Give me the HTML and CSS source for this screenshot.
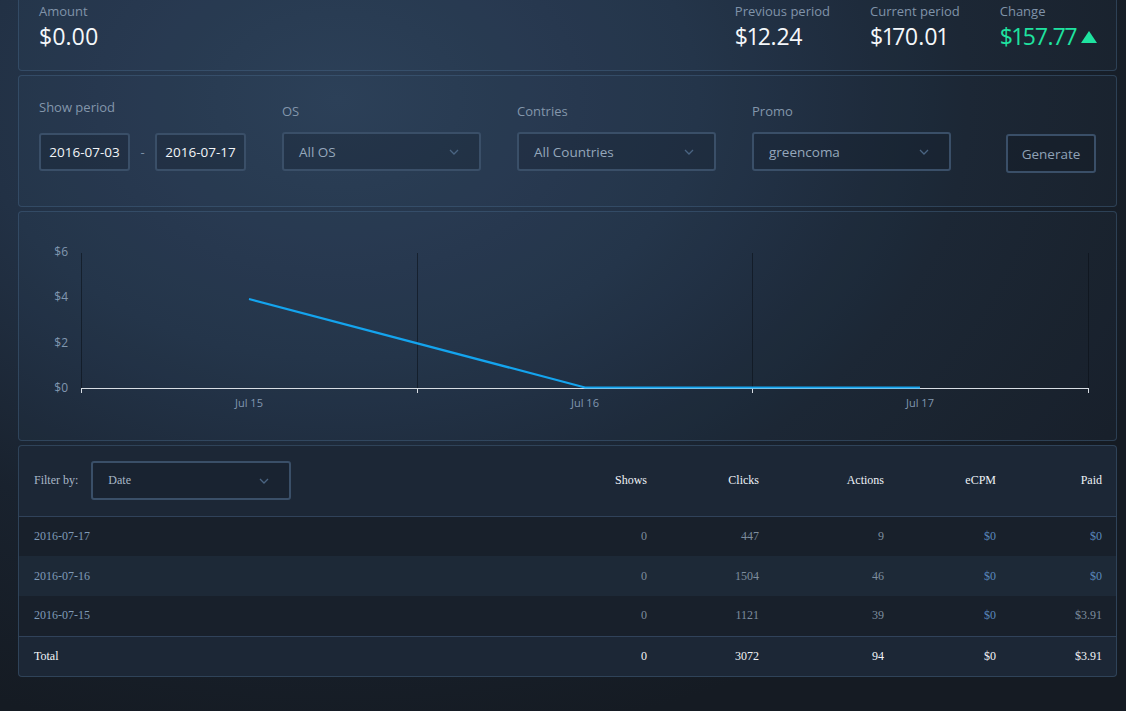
FILE: index.html
```html
<!DOCTYPE html>
<html lang="en">
<head>
    <meta charset="UTF-8">
    <meta name="viewport" content="width=device-width, initial-scale=1.0">
    <title>Statistics</title>
    <link rel="stylesheet" href="styles.css">
</head>
<body>

    <div class="page">

        <!-- summary -->
        <section class="panel summary">
            <div class="stat">
                <div class="stat-label">Amount</div>
                <div class="stat-value">$0.00</div>
            </div>
            <div class="stats-right">
                <div class="stat">
                    <div class="stat-label">Previous period</div>
                    <div class="stat-value">$12.24</div>
                </div>
                <div class="stat">
                    <div class="stat-label">Current period</div>
                    <div class="stat-value">$170.01</div>
                </div>
                <div class="stat">
                    <div class="stat-label">Change</div>
                    <div class="stat-value up">$157.77
                        <svg class="arrow" width="16" height="12" viewBox="0 0 16 12"><path d="M8 0L16 12H0z" fill="#1fe3a0"/></svg>
                    </div>
                </div>
            </div>
        </section>

        <!-- filters -->
        <section class="panel filters">
            <div class="field period">
                <label>Show period</label>
                <div class="date-range">
                    <div class="input date">2016-07-03</div>
                    <span class="dash">-</span>
                    <div class="input date">2016-07-17</div>
                </div>
            </div>
            <div class="field">
                <label>OS</label>
                <div class="input select">All OS
                    <svg class="chevron" width="10" height="6" viewBox="0 0 10 6"><path d="M1 1l4 4 4-4" fill="none" stroke="#4a6482" stroke-width="1.3"/></svg>
                </div>
            </div>
            <div class="field">
                <label>Contries</label>
                <div class="input select">All Countries
                    <svg class="chevron" width="10" height="6" viewBox="0 0 10 6"><path d="M1 1l4 4 4-4" fill="none" stroke="#4a6482" stroke-width="1.3"/></svg>
                </div>
            </div>
            <div class="field">
                <label>Promo</label>
                <div class="input select">greencoma
                    <svg class="chevron" width="10" height="6" viewBox="0 0 10 6"><path d="M1 1l4 4 4-4" fill="none" stroke="#4a6482" stroke-width="1.3"/></svg>
                </div>
            </div>
            <button class="generate">Generate</button>
        </section>

        <!-- chart -->
        <section class="panel chart">
            <svg width="1097" height="227" viewBox="0 0 1097 227">
                <g stroke="rgba(10, 15, 22, 0.55)" stroke-width="1">
                    <line x1="62.5" y1="41" x2="62.5" y2="176"/>
                    <line x1="398.5" y1="41" x2="398.5" y2="176"/>
                    <line x1="733.5" y1="41" x2="733.5" y2="176"/>
                    <line x1="1069.5" y1="41" x2="1069.5" y2="176"/>
                </g>
                <g class="axis-y" text-anchor="end">
                    <text x="49" y="44">$6</text>
                    <text x="49" y="89">$4</text>
                    <text x="49" y="135">$2</text>
                    <text x="49" y="180">$0</text>
                </g>
                <g stroke="#d8dde3" stroke-width="1" fill="none">
                    <line x1="62" y1="176.5" x2="1070" y2="176.5"/>
                    <line x1="62.5" y1="176" x2="62.5" y2="181"/>
                    <line x1="398.5" y1="176" x2="398.5" y2="181"/>
                    <line x1="733.5" y1="176" x2="733.5" y2="181"/>
                    <line x1="1069.5" y1="176" x2="1069.5" y2="181"/>
                </g>
                <polyline points="230,87 566,175.5 901,175.5" fill="none" stroke="#14a4ee" stroke-width="2.2"/>
                <g class="axis-x" text-anchor="middle">
                    <text x="230" y="195">Jul 15</text>
                    <text x="566" y="195">Jul 16</text>
                    <text x="901" y="195">Jul 17</text>
                </g>
            </svg>
        </section>

        <!-- report -->
        <section class="panel report">
            <table class="report-table">
                <thead>
                    <tr>
                        <th class="first">
                            <div class="filter-by">
                                <span>Filter by:</span>
                                <div class="input select small">Date
                                    <svg class="chevron" width="10" height="6" viewBox="0 0 10 6"><path d="M1 1l4 4 4-4" fill="none" stroke="#4a6482" stroke-width="1.3"/></svg>
                                </div>
                            </div>
                        </th>
                        <th class="w-shows">Shows</th>
                        <th class="w-clicks">Clicks</th>
                        <th class="w-actions">Actions</th>
                        <th class="w-ecpm">eCPM</th>
                        <th class="w-paid">Paid</th>
                    </tr>
                </thead>
                <tbody>
                    <tr>
                        <td class="first date-cell">2016-07-17</td>
                        <td>0</td><td>447</td><td>9</td>
                        <td class="money">$0</td><td class="money">$0</td>
                    </tr>
                    <tr>
                        <td class="first date-cell">2016-07-16</td>
                        <td>0</td><td>1504</td><td>46</td>
                        <td class="money">$0</td><td class="money">$0</td>
                    </tr>
                    <tr>
                        <td class="first date-cell">2016-07-15</td>
                        <td>0</td><td>1121</td><td>39</td>
                        <td class="money">$0</td><td>$3.91</td>
                    </tr>
                </tbody>
                <tfoot>
                    <tr>
                        <td class="first">Total</td>
                        <td>0</td><td>3072</td><td>94</td><td>$0</td><td>$3.91</td>
                    </tr>
                </tfoot>
            </table>
        </section>

    </div>

</body>
</html>
```

FILE: styles.css
```css
* {
    box-sizing: border-box;
}

body {
    margin: 0;
    height: 711px;
    overflow: hidden;
    font-family: "Open Sans", Arial, sans-serif;
    color: #f2f5f8;
    background: radial-gradient(ellipse 900px 650px at 30% 14%, #2b3d54 0%, #223145 40%, #19222e 70%, #151b23 100%);
}

.page {
    display: flex;
    flex-direction: column;
    gap: 4px;
    padding: 0 9px 0 18px;
}

.panel {
    background: rgba(70, 100, 135, 0.08);
    border: 1px solid rgba(72, 102, 134, 0.45);
    border-radius: 4px;
}

/* summary */

.summary {
    display: flex;
    justify-content: space-between;
    height: 71px;
    padding: 1px 19px 0 20px;
    border-top: none;
    border-radius: 0 0 4px 4px;
}

.stats-right {
    display: flex;
    gap: 40px;
}

.stat-label {
    font-size: 13px;
    line-height: 20px;
    color: #8093a9;
}

.stat-value {
    display: flex;
    align-items: center;
    font-size: 23px;
    line-height: 30px;
    color: #f4f7fa;
    font-variant-numeric: proportional-nums;
}

.stat-value.up {
    color: #1fe3a0;
}

.arrow {
    margin-left: 4px;
    margin-top: 1px;
}

/* filters */

.filters {
    display: flex;
    align-items: flex-end;
    gap: 36px;
    height: 132px;
    padding: 0 20px 35px 20px;
}

.field {
    display: flex;
    flex-direction: column;
}

.field label {
    font-size: 13px;
    line-height: 18px;
    color: #8396ab;
    margin-bottom: 12px;
}

.field.period label {
    margin-bottom: 17px;
}

.date-range {
    display: flex;
    align-items: center;
    gap: 10px;
}

.dash {
    color: #7d90a6;
    font-size: 13px;
    width: 5px;
    text-align: center;
}

.input {
    height: 39px;
    border: 2px solid #3a4f68;
    border-radius: 3px;
    background: rgba(16, 24, 34, 0.25);
    display: flex;
    align-items: center;
    font-size: 13.5px;
}

.input.date {
    width: 91px;
    height: 38px;
    justify-content: center;
    color: #f2f5f8;
}

.input.select {
    position: relative;
    width: 199px;
    padding-left: 15px;
    color: #95a7bb;
}

.chevron {
    position: absolute;
    right: 20px;
    top: 15px;
}

.generate {
    margin-left: auto;
    margin-bottom: -2px;
    width: 90px;
    height: 39px;
    border: 2px solid #3a4f68;
    border-radius: 3px;
    background: rgba(16, 24, 34, 0.3);
    color: #8fa2b7;
    font-family: "Open Sans", Arial, sans-serif;
    font-size: 13.5px;
    cursor: pointer;
}

/* chart */

.chart {
    height: 230px;
}

.chart svg {
    display: block;
}

.axis-y text,
.axis-x text {
    font-family: "Open Sans", Arial, sans-serif;
    font-size: 12px;
    fill: #8197b0;
}

.axis-x text {
    font-size: 11px;
}

/* report */

.report {
    background: #1c2736;
    overflow: hidden;
}

.report-table {
    width: 100%;
    border-collapse: collapse;
    table-layout: fixed;
    font-family: "Liberation Serif", "Times New Roman", serif;
    font-size: 12px;
}

.report-table th,
.report-table td {
    text-align: right;
    padding: 0 14px 0 0;
    font-weight: normal;
}

.report-table .first {
    text-align: left;
    padding-left: 15px;
}

.report-table th {
    height: 70px;
    color: #eef2f6;
    border-bottom: 1px solid #30425a;
}

.w-shows { width: 112px; }
.w-clicks { width: 112px; }
.w-actions { width: 125px; }
.w-ecpm { width: 112px; }
.w-paid { width: 106px; }

.filter-by {
    display: flex;
    align-items: center;
    gap: 13px;
    color: #a8b6c6;
}

.input.select.small {
    width: 200px;
    padding-left: 15px;
    font-family: "Liberation Serif", "Times New Roman", serif;
    font-size: 12px;
    color: #a8b6c6;
}

.report-table tbody td {
    height: 40px;
    color: #7d8d9e;
}

.report-table tbody tr:nth-child(odd) {
    background: #18202b;
}

.report-table tbody tr:nth-child(even) {
    background: #1d2937;
}

.report-table td.date-cell {
    color: #7f9ab7;
}

.report-table td.money {
    color: #5a88bd;
}

.report-table tfoot td {
    height: 40px;
    color: #f2f5f8;
    border-top: 1px solid #30425a;
}
```
